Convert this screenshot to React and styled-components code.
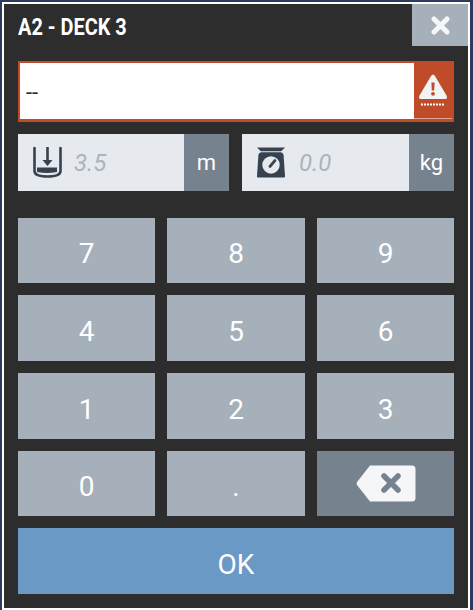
import styled, { createGlobalStyle } from 'styled-components'

const GlobalStyle = createGlobalStyle`
    html, body {
        margin: 0;
        padding: 0;
        background: #2f3b5e;
    }
    body {
        width: 473px;
        height: 610px;
        overflow: hidden;
        font-family: Roboto, "Liberation Sans", sans-serif;
    }
`

const Dialog = styled.div`
    box-sizing: border-box;
    width: 468px;
    height: 608px;
    margin: 2px 0 0 2px;
    border: 2px solid #fff;
    background: #2d2d2d;
    display: flex;
    flex-direction: column;
`

const Header = styled.div`
    display: flex;
    justify-content: space-between;
    height: 42px;
    padding-left: 14px;
`

const Title = styled.h1`
    margin: 0;
    font-size: 24px;
    line-height: 47px;
    font-weight: 700;
    color: #fff;
    transform: scaleX(0.83);
    transform-origin: left center;
    white-space: nowrap;
`

const CloseButton = styled.button`
    width: 56px;
    height: 42px;
    padding: 0;
    border: 0;
    background: #a5b0bb;
    display: flex;
    align-items: center;
    justify-content: center;
`

const Body = styled.div`
    display: flex;
    flex-direction: column;
    padding: 15px 14px 0;
`

const ValueBox = styled.div`
    box-sizing: border-box;
    height: 61px;
    border: 2px solid #bf4b28;
    border-bottom-width: 3px;
    background: #fff;
    display: flex;
    align-items: stretch;
`

const ValueText = styled.div`
    flex: 1;
    padding: 5px 0 0 6px;
    font-size: 22px;
    line-height: 50px;
    color: #2d2d2d;
`

const AlertTag = styled.div`
    width: 38px;
    background: #bf4b28;
    border-bottom: 1px solid #e2a593;
    display: flex;
    align-items: center;
    justify-content: center;
`

const Fields = styled.div`
    display: grid;
    grid-template-columns: 211px 212px;
    justify-content: space-between;
    margin-top: 12px;
`

const Field = styled.div`
    height: 57px;
    background: #e6eaee;
    display: flex;
    align-items: center;
`

const FieldIcon = styled.div`
    box-sizing: border-box;
    width: ${props => props.$width}px;
    padding-left: ${props => props.$indent}px;
    display: flex;
    align-items: center;
`

const FieldValue = styled.div`
    flex: 1;
    font-size: 24px;
    font-style: italic;
    color: #aab4bf;
`

const Unit = styled.div`
    width: 45px;
    align-self: stretch;
    background: #77828f;
    color: #fff;
    font-size: 22px;
    display: flex;
    align-items: center;
    justify-content: center;
`

const Keypad = styled.div`
    display: grid;
    grid-template-columns: 137px 138px 137px;
    grid-template-rows: 65px 66px 66px 65px;
    gap: 12px;
    margin-top: 27px;
`

const Key = styled.button`
    padding: 6px 0 0;
    border: 0;
    background: ${props => (props.$dark ? '#77828f' : '#a5b0bb')};
    color: #fff;
    font-family: inherit;
    font-size: 28px;
    display: flex;
    align-items: center;
    justify-content: center;
`

const IconKey = styled(Key)`
    padding: 0;
`

const OkButton = styled.button`
    height: 66px;
    margin-top: 12px;
    padding: 6px 0 0;
    border: 0;
    background: #6b99c6;
    color: #fff;
    font-family: inherit;
    font-size: 28px;
`

function CloseIcon() {
    return (
        <svg width="19" height="19" viewBox="0 0 19 19">
            <path d="M3 3 L16 16 M16 3 L3 16" stroke="#f4f6f8" strokeWidth="5" strokeLinecap="round" />
        </svg>
    )
}

function AlertIcon() {
    return (
        <svg width="30" height="36" viewBox="0 0 30 36">
            <path d="M15 1.5 Q16 1.5 17 3 L28.5 22.5 Q30 26 27 26 L3 26 Q0 26 1.5 22.5 L13 3 Q14 1.5 15 1.5 Z" fill="#f1f3f4" />
            <path d="M13.4 9.5 H16.6 L16.2 17.5 H13.8 Z" fill="#bf4b28" />
            <circle cx="15" cy="20.8" r="1.9" fill="#bf4b28" />
            <path d="M3 31.5 H26" stroke="#fff" strokeWidth="2" strokeDasharray="2 1" />
        </svg>
    )
}

function DepthIcon() {
    return (
        <svg width="29" height="33" viewBox="0 0 29 33">
            <path d="M1.5 2 V25 Q1.5 30.5 14.5 30.5 Q27.5 30.5 27.5 25 V2" fill="none" stroke="#36424f" strokeWidth="2.6" strokeLinecap="round" />
            <path d="M13.2 1 H15.8 V14 H19.5 L14.5 20 L9.5 14 H13.2 Z" fill="#36424f" />
            <path d="M4 21.5 H24 V26 Q14 28 4 26 Z" fill="#36424f" />
        </svg>
    )
}

function ScaleIcon() {
    return (
        <svg width="30" height="33" viewBox="0 0 31 33">
            <path d="M1 1 H30 L26 5 H5 Z" fill="#36424f" />
            <path d="M6 6 H25 Q28 6 28.5 9 L30 31 Q30 32 29 32 H2 Q1 32 1 31 L2.5 9 Q3 6 6 6 Z" fill="#36424f" />
            <circle cx="15.5" cy="19" r="9" fill="#e6eaee" />
            <path d="M14.5 20.5 L19.5 14.5" stroke="#36424f" strokeWidth="3" strokeLinecap="round" />
        </svg>
    )
}

function BackspaceIcon() {
    return (
        <svg width="60" height="37" viewBox="0 0 60 37">
            <path d="M14 0.5 H56 Q59.5 0.5 59.5 4 V33 Q59.5 36.5 56 36.5 H14 L1 20 Q0 18.5 1 17 Z" fill="#f4f6f8" />
            <path d="M28 11 L42 25 M42 11 L28 25" stroke="#77828f" strokeWidth="5.5" strokeLinecap="round" />
        </svg>
    )
}

const keys = ['7', '8', '9', '4', '5', '6', '1', '2', '3', '0', '.']

export default function App() {
    return (
        <Dialog>
            <GlobalStyle />
            <Header>
                <Title>A2 - DECK 3</Title>
                <CloseButton><CloseIcon /></CloseButton>
            </Header>
            <Body>
                <ValueBox>
                    <ValueText>--</ValueText>
                    <AlertTag><AlertIcon /></AlertTag>
                </ValueBox>
                <Fields>
                    <Field>
                        <FieldIcon $width={56} $indent={15}><DepthIcon /></FieldIcon>
                        <FieldValue>3.5</FieldValue>
                        <Unit>m</Unit>
                    </Field>
                    <Field>
                        <FieldIcon $width={57} $indent={14}><ScaleIcon /></FieldIcon>
                        <FieldValue>0.0</FieldValue>
                        <Unit>kg</Unit>
                    </Field>
                </Fields>
                <Keypad>
                    {keys.map(k => <Key key={k}>{k}</Key>)}
                    <IconKey $dark><BackspaceIcon /></IconKey>
                </Keypad>
                <OkButton>OK</OkButton>
            </Body>
        </Dialog>
    )
}
